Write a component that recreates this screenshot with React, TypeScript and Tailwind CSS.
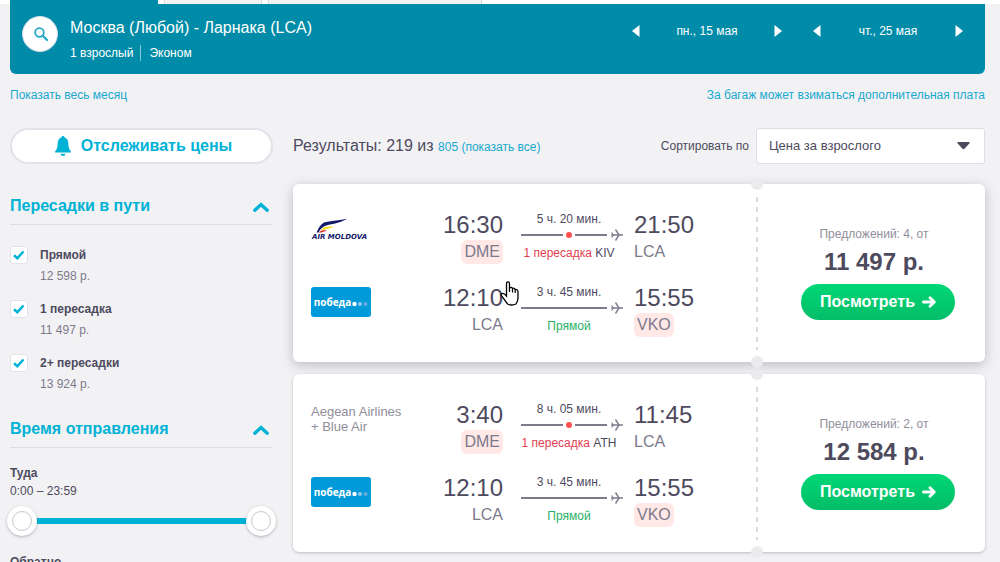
import React, { useState } from 'react';

interface Leg {
  logo: 'moldova' | 'pobeda' | null;
  airline: string;
  depart: string;
  from: string;
  arrive: string;
  to: string;
  duration: string;
  stop: string | null;
}

interface Ticket {
  id: number;
  offers: number;
  price: string;
  legs: Leg[];
  active?: boolean;
}

const returnLeg: Leg = {
  logo: 'pobeda',
  airline: 'победа',
  depart: '12:10',
  from: 'LCA',
  arrive: '15:55',
  to: 'VKO',
  duration: '3 ч. 45 мин.',
  stop: null,
};

const tickets: Ticket[] = [
  {
    id: 1,
    offers: 4,
    price: '11 497 р.',
    active: true,
    legs: [
      {
        logo: 'moldova',
        airline: 'Air Moldova',
        depart: '16:30',
        from: 'DME',
        arrive: '21:50',
        to: 'LCA',
        duration: '5 ч. 20 мин.',
        stop: 'KIV',
      },
      returnLeg,
    ],
  },
  {
    id: 2,
    offers: 2,
    price: '12 584 р.',
    legs: [
      {
        logo: null,
        airline: 'Aegean Airlines + Blue Air',
        depart: '3:40',
        from: 'DME',
        arrive: '11:45',
        to: 'LCA',
        duration: '8 ч. 05 мин.',
        stop: 'ATH',
      },
      returnLeg,
    ],
  },
];

const stops = [
  { id: 'direct', label: 'Прямой', price: '12 598 р.' },
  { id: 'one', label: '1 пересадка', price: '11 497 р.' },
  { id: 'two', label: '2+ пересадки', price: '13 924 р.' },
];

const MoldovaLogo = () => (
  <svg viewBox="0 0 60 30" className="w-[60px] h-[30px] overflow-visible" role="img" aria-label="Air Moldova">
    <path d="M5.500 18.500C8 13.500 10 9.500 14 8.300C21 6.500 29 6.500 36 4.800C32 7.500 26 9.300 17 11C12.500 12 10 14 7.500 18.500Z" fill="#141a6b" />
    <path d="M10 16.500C12 13.200 14 12.500 22.500 12.600C20 14.800 15 15 10 16.500Z" fill="#f7e017" />
    <path d="M7.500 18.500C9.500 16.500 12 16 16 16.200C14.500 17.500 12 17.800 10.500 18.500Z" fill="#e0202b" />
    <text
      x="1"
      y="25"
      fill="#141a6b"
      className="text-[7px] font-bold italic font-['DejaVu_Sans',sans-serif]"
    >
      AIR MOLDOVA
    </text>
  </svg>
);

const PobedaLogo = () => (
  <div className="flex items-center justify-center gap-px w-[60px] h-[30px] rounded-[3px] bg-[#0099d9] text-white">
    <span className="text-[10px] leading-4 font-bold font-['Open_Sans',sans-serif]">победа</span>
    <svg viewBox="0 0 16 6" className="w-4 h-[6px] mt-1" aria-hidden="true">
      <circle cx="2.500" cy="3" r="2.200" fill="#fff" />
      <circle cx="8" cy="3" r="2.100" fill="#8cc8ee" />
      <circle cx="13.500" cy="3" r="2.100" fill="#66a9e0" />
    </svg>
  </div>
);

const Plane = () => (
  <svg viewBox="0 0 12 12" className="w-3 h-3" fill="none" stroke="#7d7a8c" aria-hidden="true">
    <path d="M0.800 6H11.500" strokeWidth="1.600" strokeLinecap="round" />
    <path d="M4.500 0.500L8 6L4.500 11.500" strokeWidth="1.400" />
    <path d="M0.600 3.500L2.400 6L0.600 8.500" strokeWidth="1.100" />
  </svg>
);

const Airport = ({ code }: { code: string }) => {
  const changed = code !== 'LCA';
  return (
    <span
      className={`block w-fit h-6 leading-6 text-base text-[#7d7a8c] ${
        changed ? 'px-[3px] rounded-md bg-[#ffe8e6]' : ''
      }`}
    >
      {code}
    </span>
  );
};

const LegRow = ({ leg }: { leg: Leg }) => (
  <div className="flex h-[53px]">
    <div className="flex-1 pt-[3px]">
      {leg.logo === 'moldova' && <MoldovaLogo />}
      {leg.logo === 'pobeda' && <PobedaLogo />}
      {!leg.logo && (
        <p className="max-w-[100px] text-[13px] leading-[15px] text-[#908e9b]">{leg.airline}</p>
      )}
    </div>
    <div className="flex flex-col items-end gap-px">
      <span className="text-2xl leading-7">{leg.depart}</span>
      <Airport code={leg.from} />
    </div>
    <div className="w-[108px] ml-3 text-xs leading-4 text-center whitespace-nowrap">
      <p>{leg.duration}</p>
      <div className="flex items-center gap-1 h-4 pl-[6px]">
        <div className="flex flex-1 items-center gap-[3px]">
          <span className="flex-1 h-[2px] bg-[#7d7a8c]" />
          {leg.stop && (
            <>
              <span className="w-[6px] h-[6px] rounded-full bg-[#ff4f4f]" />
              <span className="w-8 h-[2px] bg-[#7d7a8c]" />
            </>
          )}
        </div>
        <Plane />
      </div>
      {leg.stop ? (
        <p className="pt-[2px]">
          <span className="text-[#e04050]">1 пересадка</span> {leg.stop}
        </p>
      ) : (
        <p className="pt-[2px] text-[#26b067]">Прямой</p>
      )}
    </div>
    <div className="flex flex-col gap-px w-[123px] ml-[11px]">
      <span className="text-2xl leading-7">{leg.arrive}</span>
      <Airport code={leg.to} />
    </div>
  </div>
);

const TicketCard = ({ ticket }: { ticket: Ticket }) => (
  <article
    className={`flex rounded-md bg-white ${
      ticket.active
        ? 'shadow-[0_3px_12px_rgba(60,55,85,0.3)]'
        : 'shadow-[0_1px_3px_rgba(60,55,85,0.3)]'
    }`}
  >
    <div className="flex-1 flex flex-col gap-5 pl-[18px] pt-[27px] pb-[25px]">
      {ticket.legs.map((leg) => (
        <LegRow key={leg.depart} leg={leg} />
      ))}
    </div>
    <div className="relative flex flex-col justify-center w-[228px] pl-11 pr-[30px]">
      <span className="absolute -left-[6px] -top-[6px] w-3 h-3 rounded-full bg-[#ebebee]" />
      <span className="absolute -left-[6px] -bottom-[6px] w-3 h-3 rounded-full bg-[#ebebee]" />
      <span className="absolute -left-px top-[13px] bottom-3 w-[2px] bg-[repeating-linear-gradient(to_bottom,#dcdce0_0_5px,transparent_5px_10px)]" />
      <div className="pr-2 text-center whitespace-nowrap">
        <p className="text-xs leading-4 text-[#908e9b]">Предложений: {ticket.offers}, от</p>
        <p className="pt-1 text-2xl leading-8 font-bold">{ticket.price}</p>
      </div>
      <button
        type="button"
        className="flex items-center justify-center gap-[7px] h-9 mt-[6px] rounded-full bg-linear-to-b from-[#00d775] to-[#04bd68] text-base font-bold text-white"
      >
        Посмотреть
        <svg viewBox="0 0 14 12" className="w-[14px] h-3" fill="none" stroke="#fff" strokeWidth="2.800" strokeLinecap="round" strokeLinejoin="round" aria-hidden="true">
          <path d="M1.400 6H12M8 1.800L12.300 6L8 10.200" />
        </svg>
      </button>
    </div>
  </article>
);

const DateStepper = ({ date }: { date: string }) => (
  <div className="flex items-center justify-between w-[150px] text-xs leading-4">
    <button type="button" aria-label="Предыдущий день">
      <svg viewBox="0 0 8 12" className="w-2 h-3" fill="#fff">
        <path d="M7.500 0V12L0 6Z" />
      </svg>
    </button>
    <span>{date}</span>
    <button type="button" aria-label="Следующий день">
      <svg viewBox="0 0 8 12" className="w-2 h-3" fill="#fff">
        <path d="M0.500 0V12L8 6Z" />
      </svg>
    </button>
  </div>
);

const FilterHeader = ({ title }: { title: string }) => (
  <h2 className="border-b border-[#dddde2]">
    <button
      type="button"
      className="flex items-center justify-between w-full h-[37px] pr-1 text-base font-bold text-[#00b2d6]"
    >
      {title}
      <svg viewBox="0 0 16 10" className="w-4 h-[10px] mt-[2px]" fill="none" stroke="#00b2d6" strokeWidth="3.400" strokeLinecap="round" aria-hidden="true">
        <path d="M1.800 8.200L8 2.500L14.200 8.200" />
      </svg>
    </button>
  </h2>
);

const thumb =
  'absolute inset-x-0 top-0 w-full h-[30px] m-0 appearance-none bg-transparent pointer-events-none [&::-webkit-slider-thumb]:pointer-events-auto [&::-webkit-slider-thumb]:appearance-none [&::-webkit-slider-thumb]:w-5 [&::-webkit-slider-thumb]:h-5 [&::-webkit-slider-thumb]:rounded-full [&::-webkit-slider-thumb]:border [&::-webkit-slider-thumb]:border-[#c8c7d0] [&::-webkit-slider-thumb]:bg-white [&::-webkit-slider-thumb]:shadow-[0_0_0_5px_#fff,0_1px_3px_5px_rgba(60,55,85,0.35)]';

const formatTime = (minutes: number) =>
  `${Math.floor(minutes / 60)}:${String(minutes % 60).padStart(2, '0')}`;

const TimeRange = ({ label }: { label: string }) => {
  const [from, setFrom] = useState(0);
  const [to, setTo] = useState(1439);

  return (
    <fieldset>
      <legend className="text-xs leading-[18px] font-bold">{label}</legend>
      <p className="text-xs leading-[18px]">
        {formatTime(from)} – {formatTime(to)}
      </p>
      <div className="relative flex items-center h-[30px] mt-[6px] mx-[2px]">
        <div className="w-full h-[6px] bg-[#00b2d6]" />
        <input
          type="range"
          min={0}
          max={1439}
          value={from}
          onChange={(e) => setFrom(Math.min(Number(e.target.value), to))}
          aria-label={`${label}: от`}
          className={thumb}
        />
        <input
          type="range"
          min={0}
          max={1439}
          value={to}
          onChange={(e) => setTo(Math.max(Number(e.target.value), from))}
          aria-label={`${label}: до`}
          className={thumb}
        />
      </div>
    </fieldset>
  );
};

const Sidebar = () => (
  <aside className="w-[263px] shrink-0">
    <button
      type="button"
      className="flex items-center justify-center gap-[10px] w-full h-9 pl-1 rounded-full border-2 border-[#e2e2e8] bg-white text-base font-bold text-[#00b2d6]"
    >
      <svg viewBox="0 0 16 20" className="w-4 h-5" fill="#00b2d6" aria-hidden="true">
        <path d="M8 0C9 0 9.600 0.700 9.600 1.600C12 2.300 13.200 4.300 13.300 7C13.400 11 13.800 13 16 15.500V16.500H0V15.500C2.200 13 2.600 11 2.700 7C2.800 4.300 4 2.300 6.400 1.600C6.400 0.700 7 0 8 0Z" />
        <path d="M5.500 17.800H10.500C10.200 19.200 9.200 20 8 20C6.800 20 5.800 19.200 5.500 17.800Z" />
      </svg>
      Отслеживать цены
    </button>

    <section className="mt-[23px]">
      <FilterHeader title="Пересадки в пути" />
      <ul className="flex flex-col gap-[15px] pt-[21px]">
        {stops.map((stop) => (
          <li key={stop.id} className="flex gap-3 text-xs leading-[18px]">
            <span className="relative w-[18px] h-[18px]">
              <input
                id={stop.id}
                type="checkbox"
                defaultChecked
                className="peer block w-[18px] h-[18px] appearance-none rounded-[3px] border border-[#e2e2e8] bg-white"
              />
              <svg viewBox="0 0 18 18" className="absolute inset-0 hidden pointer-events-none peer-checked:block" fill="none" stroke="#00b2d6" strokeWidth="2.500">
                <path d="M4 9.300L7.300 12.200L13.500 5.500" />
              </svg>
            </span>
            <label htmlFor={stop.id} className="flex flex-col gap-[3px]">
              <span className="font-bold">{stop.label}</span>
              <span className="text-[#7d7a8c]">{stop.price}</span>
            </label>
          </li>
        ))}
      </ul>
    </section>

    <section className="mt-[17px]">
      <FilterHeader title="Время отправления" />
      <div className="flex flex-col gap-[17px] pt-4">
        <TimeRange label="Туда" />
        <TimeRange label="Обратно" />
      </div>
    </section>
  </aside>
);

const Results = () => (
  <main className="flex-1">
    <div className="flex items-center justify-between h-9">
      <h1 className="text-base">
        Результаты: 219 из{' '}
        <a href="#all" className="text-xs text-[#18a9cf]">
          805 (показать все)
        </a>
      </h1>
      <div className="flex items-center gap-[7px]">
        <label htmlFor="sort" className="text-xs">
          Сортировать по
        </label>
        <div className="relative">
          <select
            id="sort"
            className="block w-[229px] h-9 pl-3 pr-8 appearance-none rounded-[3px] border border-[#dddde4] bg-white text-[13px]"
          >
            <option>Цена за взрослого</option>
            <option>Время в пути</option>
          </select>
          <svg viewBox="0 0 13 8" className="absolute right-[15px] top-[14px] w-[13px] h-2 pointer-events-none" fill="#4e4a5e">
            <path d="M1 0H12Q13.300 0.500 12.300 1.500L7.500 6.800Q6.500 7.600 5.500 6.800L0.700 1.500Q-0.300 0.500 1 0Z" />
          </svg>
        </div>
      </div>
    </div>
    <div className="flex flex-col gap-3 pt-5 pb-5">
      {tickets.map((ticket) => (
        <TicketCard key={ticket.id} ticket={ticket} />
      ))}
    </div>
  </main>
);

const Pointer = () => (
  <svg viewBox="0 0 19 25" className="absolute left-[500px] top-[281px] w-[19px] h-[25px] pointer-events-none" aria-hidden="true">
    <path
      d="M6.500 15V2.500Q6.500 0.800 8 0.800Q9.500 0.800 9.500 2.500V7Q11.500 5.500 12.500 7.500Q14.500 6.500 15 8.500Q18 8 18 11V17Q18 20 16 23Q12 25 7.500 23L2 15.500Q0.500 13 2 12.500Q4 12 6.500 15Z"
      fill="#fff"
      stroke="#000"
      strokeWidth="1.300"
    />
    <path d="M9.500 6V11M12.500 7.500V11.500M15.200 8.500V12" stroke="#000" strokeWidth="1.200" fill="none" />
  </svg>
);

export default function App() {
  return (
    <div className="relative min-h-screen bg-[#f2f2f4] text-[#4e4a5e] font-['Liberation_Sans',Arial,sans-serif]">
      <nav className="flex gap-[6px] h-1 pl-[10px] bg-white">
        <span className="w-[148px] bg-[#008ca8]" />
        <span className="w-[98px] border-x border-[#d8d8dc] bg-[#f2f2f4]" />
        <span className="w-[214px] border-x border-[#d8d8dc] bg-[#f2f2f4]" />
      </nav>
      <div className="pl-[10px] pr-[15px]">
        <header className="flex items-start h-[70px] pl-3 pr-[22px] pt-3 rounded-b-md bg-[#008ca8] text-white">
          <button
            type="button"
            aria-label="Изменить поиск"
            className="flex items-center justify-center w-9 h-9 pl-[2px] rounded-full border border-[#d5dbe6] bg-white"
          >
            <svg viewBox="0 0 14 14" className="w-[14px] h-[14px]" fill="none" stroke="#1fa9c6" strokeWidth="1.800">
              <circle cx="5.500" cy="5.500" r="4.300" />
              <path d="M8.700 8.700L13 13" strokeWidth="2.300" strokeLinecap="round" />
            </svg>
          </button>
          <div className="flex-1 pl-3">
            <p className="text-base leading-6">Москва (Любой) - Ларнака (LCA)</p>
            <p className="flex pt-[5px] text-xs leading-4">
              <span className="pr-[7px]">1 взрослый</span>
              <span className="pl-2 border-l border-[#7fc5d3]">Эконом</span>
            </p>
          </div>
          <div className="flex gap-[31px] pt-[7px]">
            <DateStepper date="пн., 15 мая" />
            <DateStepper date="чт., 25 мая" />
          </div>
        </header>

        <div className="flex justify-between pt-[13px] pb-[25px] text-xs leading-4 text-[#18a9cf]">
          <a href="#month">Показать весь месяц</a>
          <a href="#baggage">За багаж может взиматься дополнительная плата</a>
        </div>

        <div className="flex gap-5">
          <Sidebar />
          <Results />
        </div>
      </div>
      <Pointer />
    </div>
  );
}
